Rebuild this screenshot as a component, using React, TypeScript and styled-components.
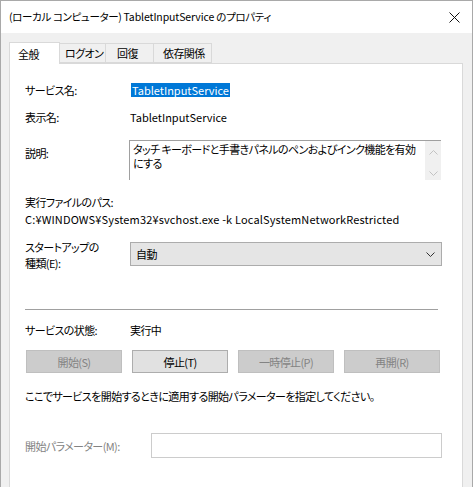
import styled, { createGlobalStyle } from "styled-components";

const GlobalStyle = createGlobalStyle`
  html, body {
    margin: 0;
    padding: 0;
    background: #ffffff;
  }
  body {
    font-family: "Noto Sans CJK JP", "Liberation Sans", sans-serif;
    font-size: 11px;
    letter-spacing: -0.6px;
    color: #000;
    font-feature-settings: "palt";
  }
`;

const tabs = ["全般", "ログオン", "回復", "依存関係"];
const buttons = [
  { label: "開始(S)", disabled: true },
  { label: "停止(T)", disabled: false },
  { label: "一時停止(P)", disabled: true },
  { label: "再開(R)", disabled: true },
];

const CloseIcon = () => (
  <svg width="11" height="11" viewBox="0 0 11 11">
    <path d="M0.5 0.5 L10.5 10.5 M10.5 0.5 L0.5 10.5" stroke="#111" strokeWidth="1" />
  </svg>
);

const Chevron = ({ up, color }: { up?: boolean; color: string }) => (
  <svg width="9" height="5" viewBox="0 0 9 5">
    <path d={up ? "M0.5 4.5 L4.5 0.5 L8.5 4.5" : "M0.5 0.5 L4.5 4.5 L8.5 0.5"} stroke={color} strokeWidth="1" fill="none" />
  </svg>
);

const App = () => {
  return (
    <>
      <GlobalStyle />
      <Window>
        <TitleBar>
          <Title>(ローカル コンピューター) <Latin>TabletInputService</Latin> のプロパティ</Title>
          <CloseBtn><CloseIcon /></CloseBtn>
        </TitleBar>
        <Body>
          <TabStrip>
            {tabs.map((t, i) => (
              <Tab key={t} $active={i === 0}>{t}</Tab>
            ))}
          </TabStrip>
          <Panel>
            <Row $top={0}>
              <Label>サービス名:</Label>
              <Selected>TabletInputService</Selected>
            </Row>
            <Row $top={11}>
              <Label>表示名:</Label>
              <Value><Latin>TabletInputService</Latin></Value>
            </Row>
            <Row $top={15}>
              <Label $pad={5}>説明:</Label>
              <TextBox>
                <TextBoxText>タッチ キーボードと手書きパネルのペンおよびインク機能を有効にする</TextBoxText>
                <ScrollBar>
                  <Chevron up color="#c2c2c2" />
                  <Chevron color="#c2c2c2" />
                </ScrollBar>
              </TextBox>
            </Row>
            <Line $top={14}>実行ファイルのパス:</Line>
            <Line $top={1}><Latin $wide>C:¥WINDOWS¥System32¥svchost.exe -k LocalSystemNetworkRestricted</Latin></Line>
            <Row $top={12}>
              <Label>スタートアップの<br />種類(E):</Label>
              <Select>
                <span>自動</span>
                <Chevron color="#333" />
              </Select>
            </Row>
            <Separator />
            <Row $top={12}>
              <Label>サービスの状態:</Label>
              <Value>実行中</Value>
            </Row>
            <ButtonRow>
              {buttons.map((b) => (
                <Button key={b.label} $disabled={b.disabled}>{b.label}</Button>
              ))}
            </ButtonRow>
            <Line $top={15}>ここでサービスを開始するときに適用する開始パラメーターを指定してください。</Line>
            <ParamRow>
              <ParamLabel>開始パラメーター(M):</ParamLabel>
              <ParamInput />
            </ParamRow>
          </Panel>
        </Body>
      </Window>
    </>
  );
};

const Latin = styled.span<{ $wide?: boolean }>`
  letter-spacing: ${({ $wide }) => ($wide ? "0.15px" : "0")};
`;

const Window = styled.div`
  width: 473px;
  height: 487px;
  box-sizing: border-box;
  border: 1px solid #a9a9a9;
  border-bottom: none;
  background: #f0f0f0;
  display: flex;
  flex-direction: column;
  overflow: hidden;
`;

const TitleBar = styled.div`
  height: 32px;
  background: #ffffff;
  display: flex;
  align-items: center;
  justify-content: space-between;
  padding-left: 8px;
  flex-shrink: 0;
`;

const Title = styled.div`
  font-size: 10.5px;
  letter-spacing: -0.35px;
  line-height: 16px;
  color: #000;
  white-space: nowrap;
  & > span {
    letter-spacing: -0.1px;
  }
`;

const CloseBtn = styled.div`
  width: 46px;
  height: 32px;
  display: flex;
  align-items: center;
  justify-content: center;
  margin-right: -5px;
`;

const Body = styled.div`
  flex: 1;
  display: flex;
  flex-direction: column;
  padding: 9px 9px 0 8px;
`;

const TabStrip = styled.div`
  display: flex;
  align-items: flex-end;
  height: 21px;
  position: relative;
  z-index: 1;
`;

const Tab = styled.div<{ $active: boolean }>`
  box-sizing: border-box;
  height: ${({ $active }) => ($active ? "22px" : "20px")};
  margin-bottom: ${({ $active }) => ($active ? "-1px" : "0")};
  padding: 0 ${({ $active }) => ($active ? "8px" : "5px")};
  width: 51px;
  white-space: nowrap;
  background: ${({ $active }) => ($active ? "#ffffff" : "#f0f0f0")};
  border: 1px solid #d9d9d9;
  border-bottom: ${({ $active }) => ($active ? "none" : "1px solid #d9d9d9")};
  margin-left: ${({ $active }) => ($active ? "0" : "-1px")};
  display: flex;
  align-items: center;
  line-height: 16px;
  &:nth-child(2) { width: 47px; }
  &:nth-child(3) { width: 49px; padding-left: 11px; }
  &:nth-child(4) { width: 59px; padding-left: 9px; }
`;

const Panel = styled.div`
  flex: 1;
  background: #ffffff;
  border: 1px solid #d9d9d9;
  border-bottom: none;
  padding: 18px 20px 0 15px;
  display: flex;
  flex-direction: column;
`;

const Row = styled.div<{ $top: number }>`
  display: flex;
  align-items: flex-start;
  margin-top: ${({ $top }) => $top}px;
`;

const Label = styled.div<{ $pad?: number }>`
  width: 105px;
  flex-shrink: 0;
  line-height: 16px;
  padding-top: ${({ $pad }) => $pad || 0}px;
`;

const Value = styled.div`
  line-height: 16px;
`;

const Selected = styled.span`
  line-height: 14px;
  margin-top: 1px;
  padding: 0 1px;
  margin-left: 1px;
  letter-spacing: 0;
  background: #0078d7;
  color: #ffffff;
`;

const TextBox = styled.div`
  width: 312px;
  height: 40px;
  box-sizing: border-box;
  margin-left: -1px;
  border-top: 1px solid #a0a0a0;
  border-left: 1px solid #a0a0a0;
  display: flex;
`;

const TextBoxText = styled.div`
  flex: 1;
  line-height: 14px;
  padding: 1px 6px 0 3px;
`;

const ScrollBar = styled.div`
  width: 16px;
  background: #f0f0f0;
  display: flex;
  flex-direction: column;
  align-items: center;
  justify-content: space-between;
  padding: 9px 0 4px;
  box-sizing: border-box;
`;

const Line = styled.div<{ $top: number }>`
  line-height: 16px;
  margin-top: ${({ $top }) => $top}px;
  white-space: nowrap;
`;

const Select = styled.div`
  width: 312px;
  height: 24px;
  box-sizing: border-box;
  margin-top: 3px;
  background: #e5e5e5;
  border: 1px solid #acacac;
  display: flex;
  align-items: center;
  justify-content: space-between;
  padding: 0 6px 0 5px;
`;

const Separator = styled.div`
  height: 1px;
  background: #a0a0a0;
  margin: 38px 4px 0 0;
`;

const ButtonRow = styled.div`
  display: flex;
  gap: 10px;
  margin: 12px 0 0 1px;
`;

const Button = styled.div<{ $disabled: boolean }>`
  width: 96px;
  height: 23px;
  box-sizing: border-box;
  display: flex;
  align-items: center;
  justify-content: center;
  background: ${({ $disabled }) => ($disabled ? "#cccccc" : "#e1e1e1")};
  border: 1px solid ${({ $disabled }) => ($disabled ? "#bfbfbf" : "#adadad")};
  color: ${({ $disabled }) => ($disabled ? "#838383" : "#000")};
`;

const ParamRow = styled.div`
  display: flex;
  align-items: center;
  margin-top: 29px;
`;

const ParamLabel = styled.div`
  width: 126px;
  line-height: 16px;
  color: #838383;
`;

const ParamInput = styled.div`
  width: 292px;
  height: 25px;
  box-sizing: border-box;
  border: 1px solid #cccccc;
  background: #fff;
`;

export default App;
